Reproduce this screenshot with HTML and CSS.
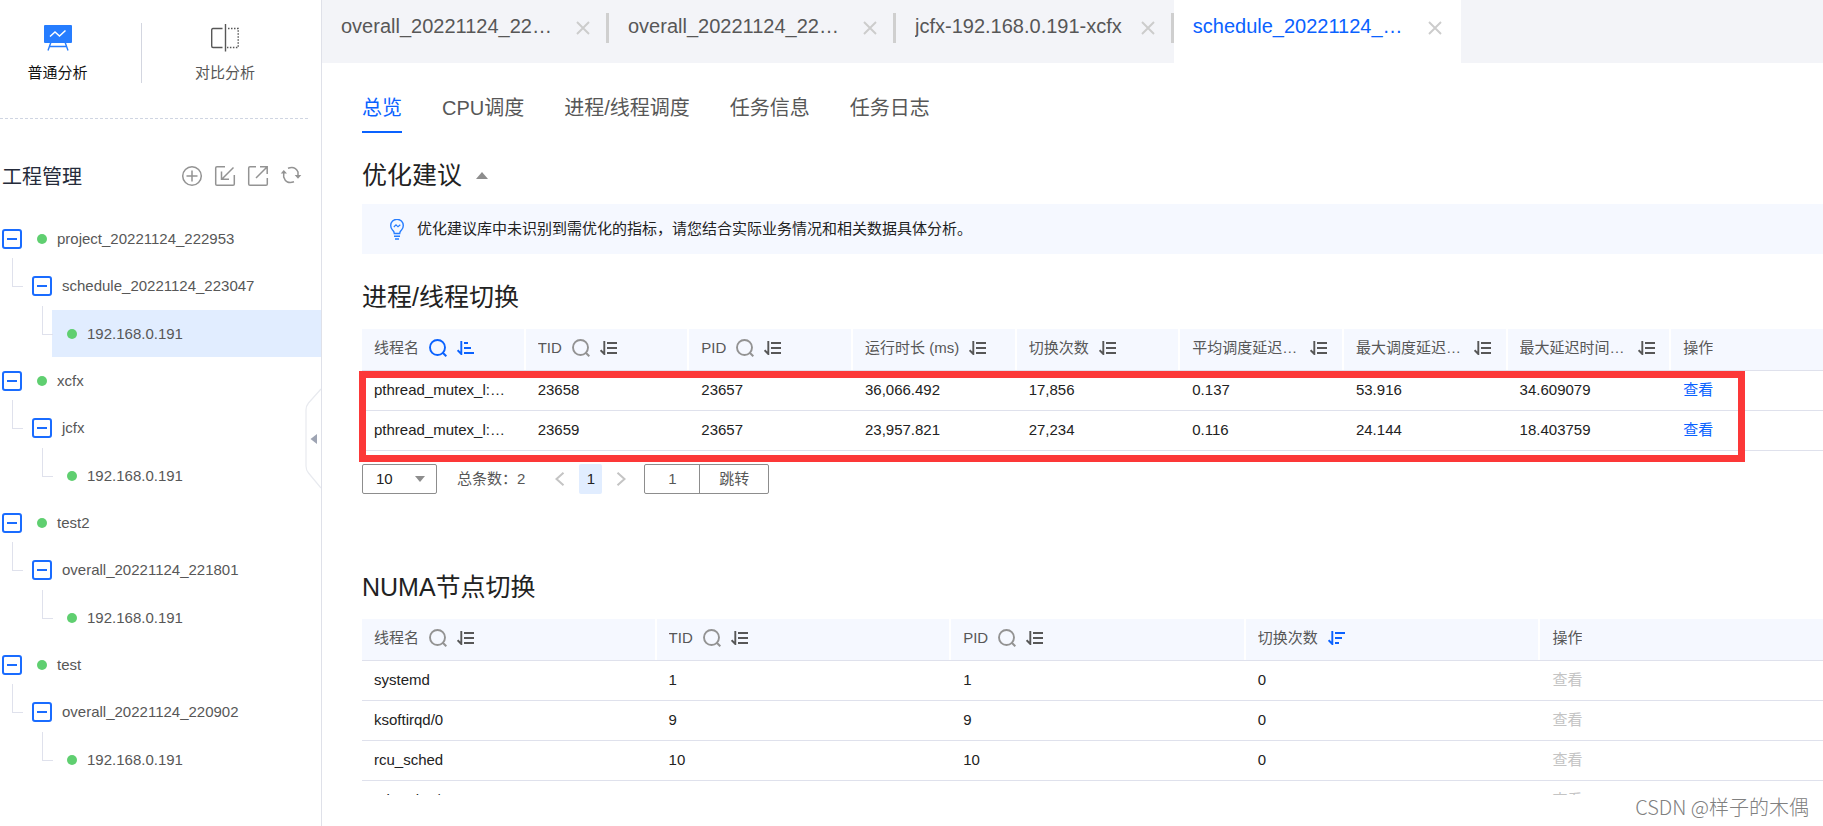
FILE: index.html
```html
<!DOCTYPE html>
<html lang="zh-CN">
<head>
<meta charset="utf-8">
<title>工程管理</title>
<link rel="stylesheet" href="styles.css">
</head>
<body>
<svg class="sprite" aria-hidden="true">
  <symbol id="search" viewBox="0 0 18 18"><circle cx="8.5" cy="8.5" r="7.5" fill="none" stroke="currentColor" stroke-width="1.9"/><path d="M13.5 13.5L17.3 17.3" stroke="currentColor" stroke-width="2"/></symbol>
  <symbol id="sort" viewBox="0 0 17 14"><path d="M4.3 0V13L0.6 9.2M7 2H17M7 7H17M7 12H17" fill="none" stroke="currentColor" stroke-width="1.9"/></symbol>
  <symbol id="sort-asc" viewBox="0 0 17 14"><path d="M4.3 0V13L0.6 9.2M7 2H11M7 7H14M7 12H17" fill="none" stroke="currentColor" stroke-width="1.9"/></symbol>
  <symbol id="sort-desc" viewBox="0 0 17 14"><path d="M4.3 0V13L0.6 9.2M7 2H17M7 7H14M7 12H11" fill="none" stroke="currentColor" stroke-width="1.9"/></symbol>
  <symbol id="close" viewBox="0 0 14 14"><path d="M1 1L13 13M13 1L1 13" stroke="currentColor" stroke-width="1.9"/></symbol>
</svg>
<div class="app">
  <aside class="sidebar">
    <div class="modes">
      <button class="mode mode-on" type="button">
        <svg width="28" height="28" viewBox="0 0 28 28"><path d="M7 18L4 26.500M21 18L24 26.500M5.500 22.500H22.500" fill="none" stroke="#267dff" stroke-width="1.4"/><rect y="1" width="28" height="18" rx="1" fill="#267dff"/><path d="M6 12.500L11 8L15.500 12L21.500 6.500" fill="none" stroke="#fff" stroke-width="1.5"/></svg>
        <span>普通分析</span>
      </button>
      <button class="mode" type="button">
        <svg width="28" height="28" viewBox="0 0 28 28"><path d="M11.500 4.500H2Q.7 4.500 .7 6V22Q.7 23.500 2 23.500H11.500M14.500 0V27.500" fill="none" stroke="#575757" stroke-width="1.4"/><path d="M17 4.500H27.200V23.500H16" fill="none" stroke="#575757" stroke-width="1.4" stroke-dasharray="1.500 1.500"/></svg>
        <span>对比分析</span>
      </button>
    </div>
    <div class="side-head">
      <h2>工程管理</h2>
      <div class="tools">
        <button type="button" aria-label="新建"><svg width="20" height="20" viewBox="0 0 20 20"><circle cx="10" cy="10" r="9.300"/><path d="M10 4.500V15.500M4.500 10H15.500"/></svg></button>
        <button type="button" aria-label="导入"><svg width="20" height="20" viewBox="0 0 20 20"><path d="M10 .7H2Q.7 .7 .7 2V18Q.7 19.300 2 19.300H18Q19.300 19.300 19.300 18V9M18.500 1.500L7 13M6.500 5.500V13.300H14"/></svg></button>
        <button type="button" aria-label="导出"><svg width="20" height="20" viewBox="0 0 20 20"><path d="M8 .7H2Q.7 .7 .7 2V18Q.7 19.300 2 19.300H18Q19.300 19.300 19.300 18V12M12 .8H19.200V8M19 1L8 12"/></svg></button>
        <button type="button" aria-label="刷新"><svg width="20" height="20" viewBox="0 0 20 20"><path d="M7 2.200Q14 -.5 17 6V10M13 15.800Q5 18.500 2.700 11V7"/><path d="M13.700 9H20.300L17 12.800ZM-.3 7.500H6L2.800 4Z" class="solid"/></svg></button>
      </div>
    </div>
    <ul class="tree">
      <li><div class="node root"><button class="toggle" type="button" aria-label="收起"></button><i class="dot"></i>project_20221124_222953</div>
        <ul><li><div class="node task"><button class="toggle" type="button" aria-label="收起"></button>schedule_20221124_223047</div>
          <ul><li><div class="node leaf selected"><i class="dot"></i>192.168.0.191</div></li></ul></li></ul></li>
      <li><div class="node root"><button class="toggle" type="button" aria-label="收起"></button><i class="dot"></i>xcfx</div>
        <ul><li><div class="node task"><button class="toggle" type="button" aria-label="收起"></button>jcfx</div>
          <ul><li><div class="node leaf"><i class="dot"></i>192.168.0.191</div></li></ul></li></ul></li>
      <li><div class="node root"><button class="toggle" type="button" aria-label="收起"></button><i class="dot"></i>test2</div>
        <ul><li><div class="node task"><button class="toggle" type="button" aria-label="收起"></button>overall_20221124_221801</div>
          <ul><li><div class="node leaf"><i class="dot"></i>192.168.0.191</div></li></ul></li></ul></li>
      <li><div class="node root"><button class="toggle" type="button" aria-label="收起"></button><i class="dot"></i>test</div>
        <ul><li><div class="node task"><button class="toggle" type="button" aria-label="收起"></button>overall_20221124_220902</div>
          <ul><li><div class="node leaf"><i class="dot"></i>192.168.0.191</div></li></ul></li></ul></li>
    </ul>
    <button class="handle" type="button" aria-label="折叠侧栏"><svg width="16" height="102" viewBox="0 0 16 102"><path d="M16 1L3.500 15Q1 18 1 22V78Q1 82 3.500 85L16 100" fill="#fff" stroke="#e8eaef" stroke-width="1.2"/><path d="M12 46V56L5.500 51Z" fill="#9ea4b3"/></svg></button>
  </aside>
  <main class="main">
    <nav class="tabs">
      <div class="tab"><span>overall_20221124_223312</span><button type="button" aria-label="关闭"><svg width="14" height="14"><use href="#close"/></svg></button></div>
      <div class="tab"><span>overall_20221124_223145</span><button type="button" aria-label="关闭"><svg width="14" height="14"><use href="#close"/></svg></button></div>
      <div class="tab"><span>jcfx-192.168.0.191-xcfx</span><button type="button" aria-label="关闭"><svg width="14" height="14"><use href="#close"/></svg></button></div>
      <div class="tab tab-on"><span>schedule_20221124_223047</span><button type="button" aria-label="关闭"><svg width="14" height="14"><use href="#close"/></svg></button></div>
    </nav>
    <div class="content">
      <nav class="subnav">
        <a href="#" class="on">总览</a><a href="#">CPU调度</a><a href="#">进程/线程调度</a><a href="#">任务信息</a><a href="#">任务日志</a>
      </nav>
      <h1 class="first">优化建议<svg width="12" height="7" viewBox="0 0 12 7"><path d="M6 0L12 7H0Z" fill="#8d8d8d"/></svg></h1>
      <p class="tip"><svg width="14" height="21" viewBox="0 0 14 21"><path d="M4.300 14.500Q4.200 12.500 2.500 11A6.300 6.300 0 1 1 11.500 11Q9.800 12.500 9.700 14.500ZM4 17.300H10M5 20H9" fill="none" stroke="#267dff" stroke-width="1.400"/><path d="M3.800 8L6 5.800L8 7.800L10.300 5.800" fill="none" stroke="#267dff" stroke-width="1.200"/></svg><span>优化建议库中未识别到需优化的指标，请您结合实际业务情况和相关数据具体分析。</span></p>

      <h1>进程/线程切换</h1>
      <div class="table-wrap">
        <table>
          <thead><tr>
            <th><div><span>线程名</span><svg class="find active"><use href="#search"/></svg><svg class="sort active"><use href="#sort-asc"/></svg></div></th>
            <th><div><span>TID</span><svg class="find"><use href="#search"/></svg><svg class="sort"><use href="#sort"/></svg></div></th>
            <th><div><span>PID</span><svg class="find"><use href="#search"/></svg><svg class="sort"><use href="#sort"/></svg></div></th>
            <th><div><span>运行时长 (ms)</span><svg class="sort"><use href="#sort"/></svg></div></th>
            <th><div><span>切换次数</span><svg class="sort"><use href="#sort"/></svg></div></th>
            <th><div><span>平均调度延迟时间 (ms)</span><svg class="sort"><use href="#sort"/></svg></div></th>
            <th><div><span>最大调度延迟时间 (ms)</span><svg class="sort"><use href="#sort"/></svg></div></th>
            <th><div><span>最大延迟时间点 (s)</span><svg class="sort"><use href="#sort"/></svg></div></th>
            <th><div><span>操作</span></div></th>
          </tr></thead>
          <tbody>
            <tr><td>pthread_mutex_l:worker</td><td>23658</td><td>23657</td><td>36,066.492</td><td>17,856</td><td>0.137</td><td>53.916</td><td>34.609079</td><td><a href="#">查看</a></td></tr>
            <tr><td>pthread_mutex_l:worker</td><td>23659</td><td>23657</td><td>23,957.821</td><td>27,234</td><td>0.116</td><td>24.144</td><td>18.403759</td><td><a href="#">查看</a></td></tr>
          </tbody>
        </table>
        <div class="mark"></div>
      </div>
      <div class="pager">
        <span class="size"><select aria-label="每页条数"><option>10</option></select><svg width="10" height="6" viewBox="0 0 10 6"><path d="M0 0H10L5 6Z" fill="#8d8d8d"/></svg></span>
        <span class="total">总条数：2</span>
        <button class="arrow" type="button" aria-label="上一页"><svg width="10" height="14" viewBox="0 0 10 14"><path d="M8.500 .8L1.500 7L8.500 13.200"/></svg></button>
        <button class="page" type="button">1</button>
        <button class="arrow" type="button" aria-label="下一页"><svg width="10" height="14" viewBox="0 0 10 14"><path d="M1.500 .8L8.500 7L1.500 13.200"/></svg></button>
        <span class="jump"><input type="text" value="1" aria-label="页码"><button type="button">跳转</button></span>
      </div>

      <h1>NUMA节点切换</h1>
      <table>
        <thead><tr>
          <th><div><span>线程名</span><svg class="find"><use href="#search"/></svg><svg class="sort"><use href="#sort"/></svg></div></th>
          <th><div><span>TID</span><svg class="find"><use href="#search"/></svg><svg class="sort"><use href="#sort"/></svg></div></th>
          <th><div><span>PID</span><svg class="find"><use href="#search"/></svg><svg class="sort"><use href="#sort"/></svg></div></th>
          <th><div><span>切换次数</span><svg class="sort active"><use href="#sort-desc"/></svg></div></th>
          <th><div><span>操作</span></div></th>
        </tr></thead>
        <tbody>
          <tr><td>systemd</td><td>1</td><td>1</td><td>0</td><td><span class="off">查看</span></td></tr>
          <tr><td>ksoftirqd/0</td><td>9</td><td>9</td><td>0</td><td><span class="off">查看</span></td></tr>
          <tr><td>rcu_sched</td><td>10</td><td>10</td><td>0</td><td><span class="off">查看</span></td></tr>
          <tr><td>migration/0</td><td>12</td><td>12</td><td>0</td><td><span class="off">查看</span></td></tr>
        </tbody>
      </table>
    </div>
    <footer class="credit">CSDN @样子的木偶</footer>
  </main>
</div>
</body>
</html>
```
FILE: styles.css
```css
* { box-sizing: border-box; }
body {
  margin: 0;
  font: 400 15px/20px "Liberation Sans", "Noto Sans CJK SC", sans-serif;
  color: #222;
  background: #fff;
}
button { border: 0; padding: 0; background: none; font: inherit; color: inherit; }
a { color: inherit; text-decoration: none; }
ul { list-style: none; margin: 0; padding: 0; }
h1, h2, p { margin: 0; font-weight: 400; }
svg { display: block; flex: none; }
.sprite { position: absolute; width: 0; height: 0; }
.app { display: flex; height: 100vh; }

/* sidebar */
.sidebar { position: relative; flex: none; width: 322px; border-right: 1px solid #dfe1e9; }
.modes {
  display: flex;
  padding: 23px 0 35px;
  margin-right: 13px;
  border-bottom: 1px dashed #cfd5e2;
}
.mode {
  display: flex;
  flex-direction: column;
  align-items: center;
  gap: 11px;
  height: 60px;
  padding: 1px 0 0 53px;
  color: #575757;
}
.mode-on { width: 142px; padding: 1px 26px 0 0; border-right: 1px solid #d3d6e0; color: #111; }
.side-head { display: flex; align-items: flex-start; justify-content: space-between; height: 96px; padding: 43px 8px 0 2px; margin-right: 12px; }
.side-head h2 { font-size: 20px; line-height: 30px; color: #252b3a; }
.tools { display: flex; gap: 13px; padding-top: 4px; }
.tools svg { fill: none; stroke: #939393; stroke-width: 1.5; overflow: visible; }
.tools .solid { fill: #939393; stroke: none; }
.node { display: flex; align-items: center; position: relative; height: 48px; color: #575757; }
.root { height: 47px; padding-left: 2px; }
.task { padding-left: 32px; gap: 10px; }
.root .dot { margin: 0 10px 0 15px; }
.leaf { height: 47px; margin-left: 52px; padding-left: 15px; gap: 10px; }
.selected { background: #e1edff; }
.dot { width: 10px; height: 10px; border-radius: 50%; background: #5fcf70; }
.toggle { width: 20px; height: 20px; border: 2px solid #1a6cff; border-radius: 3px; display: grid; place-items: center; }
.toggle::before { content: ""; width: 10px; height: 2px; background: #1a6cff; }
.task::before, .leaf::before {
  content: "";
  position: absolute;
  left: 12px;
  top: -4px;
  width: 10px;
  height: 28px;
  border: solid #dfe1ec;
  border-width: 0 0 1px 1px;
}
.leaf::before { left: -10px; }
.handle { position: absolute; right: 0; top: 388px; }

/* open reports */
.main { flex: 1; min-width: 0; display: flex; flex-direction: column; }
.tabs { display: flex; height: 63px; flex: none; background: #f3f4f8; }
.tab { position: relative; display: flex; align-items: flex-start; gap: 19px; padding: 14px 19px 0; font-size: 20px; line-height: 24px; color: #575757; }
.tab span { max-width: 216px; overflow: hidden; text-overflow: ellipsis; white-space: nowrap; }
.tab button { color: #ccc; padding-top: 7px; }
.tab::after { content: ""; position: absolute; right: 0; top: 13px; width: 3px; height: 30px; background: #cfcfcf; }
.tab-on { background: #fff; color: #0a62ff; }
.tab-on::after { display: none; }

.content { flex: 1; min-height: 0; overflow: hidden; padding-left: 40px; }
.subnav { display: flex; gap: 40px; font-size: 20px; line-height: 30px; color: #575757; }
.subnav a { padding: 30px 0 8px; border-bottom: 2px solid transparent; }
.subnav .on { color: #0a62ff; border-color: #0a62ff; }
h1 { font-size: 25px; line-height: 30px; margin: 28px 0 17px; }
.first { display: flex; align-items: center; gap: 14px; margin: 27px 0 14px; }
.tip { display: flex; align-items: center; gap: 13px; height: 50px; padding-left: 28px; background: #f5f8ff; }

/* data tables run under the right edge of the pane */
.table-wrap { position: relative; }
table { width: calc(100% + 12px); table-layout: fixed; border-collapse: separate; border-spacing: 0; }
th, td { text-align: left; font-weight: 400; border-bottom: 1px solid #dfe1ec; padding: 0 12px 2px; overflow: hidden; text-overflow: ellipsis; white-space: nowrap; }
th { height: 42px; padding-bottom: 3px; background: #f5f8ff; color: #575757; box-shadow: inset -2px 0 #fff; }
th:last-child { box-shadow: none; }
th div { display: flex; align-items: center; gap: 10px; }
th span { max-width: 108px; overflow: hidden; text-overflow: ellipsis; }
td { height: 40px; }
td a { color: #0a62ff; }
.off { color: #c4c4c4; }
.find { width: 18px; height: 18px; color: #939393; }
.sort { width: 17px; height: 14px; color: #575757; }
.find.active, .sort.active { color: #0a62ff; }
.mark { position: absolute; left: -3px; right: 78px; top: 42px; height: 91px; border: 7px solid #fc3838; }

.pager { display: flex; align-items: center; height: 30px; margin: 13px 0 78px; color: #575757; }
.size { position: relative; width: 75px; height: 30px; }
.size select { appearance: none; width: 100%; height: 100%; border: 1px solid #8d8d8d; border-radius: 2px; background: none; padding: 0 13px; font: inherit; color: #222; }
.size svg { position: absolute; right: 12px; top: 12px; }
.total { margin: 0 30px 0 20px; }
.arrow svg { fill: none; stroke: #c4c4c4; stroke-width: 2; }
.page { width: 23px; height: 30px; margin: 0 14px; border-radius: 2px; background: #e1edff; color: #222; }
.jump { display: flex; width: 125px; height: 30px; margin-left: 18px; border: 1px solid #8d8d8d; border-radius: 2px; }
.jump input { width: 55px; border: 0; border-right: 1px solid #8d8d8d; padding: 0; text-align: center; font: inherit; color: inherit; background: none; }
.jump button { flex: 1; }

.credit { flex: none; height: 31px; padding-right: 14px; text-align: right; font: 300 20px/24px "Noto Sans CJK SC", sans-serif; color: #808080; }
```
